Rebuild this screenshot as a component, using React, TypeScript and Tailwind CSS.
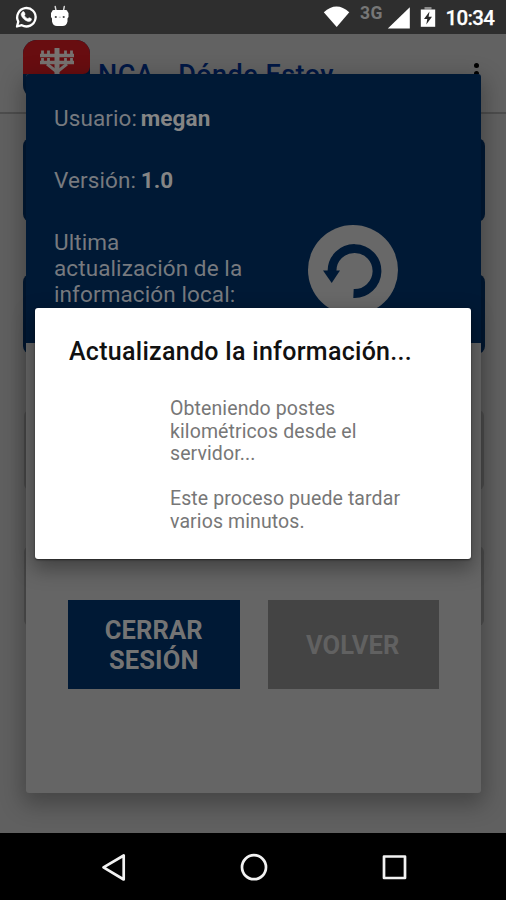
import React from "react";

function StatusBar() {
  return (
    <header className="relative z-30 h-[34px] shrink-0 bg-[#2e2e2e]">
      <svg width="506" height="34" viewBox="0 0 506 34" aria-hidden="true">
        <path d="M17 26.5 18.3 21.6A9.2 9.2 0 1 1 21.8 25.2Z" fill="none" stroke="#fff" strokeWidth="2.300" strokeLinejoin="round" />
        <path d="M22.7 11.8c.5-.4 1.2-.3 1.5.2l.9 2c.2.6-.8 1.3-.6 1.7.7 1.4 1.7 2.3 3.1 2.9.5.2 1.2-1.1 1.7-.9l1.9.9c.5.3.3 1.4-.1 2-.8 1-2.3 1.2-3.8.6-3-1.1-5-3.2-6-5.7-.5-1.400.1-2.900 1.400-3.700Z" fill="#fff" stroke="#fff" strokeWidth=".5" />
        <path d="m55.200 6.500.8 4M64.300 6.500l-.8 4" stroke="#ddd" strokeWidth="1.400" strokeLinecap="round" />
        <path d="M53.500 10h12.500q1.500 0 1.500 1.500l1 1.500v4l-1 1.500v3q-1 4.500-5 4.500h-5.500q-4 0-5-4.500v-3l-1-1.500v-4l1-1.500q0-1.500 1.500-1.500Z" fill="#fff" />
        <circle cx="55.800" cy="17" r="1.100" fill="#444" />
        <circle cx="63.700" cy="17" r="1.100" fill="#444" />
        <path d="M58.800 17.200h2" stroke="#bbb" />
        <path d="M323.800 12.200Q336.500 1 349.300 12.200L336.700 27Z" fill="#fff" />
        <path d="M409.800 7.200V28.500H387.800Z" fill="#fff" />
        <path d="M424.500 9.500V7h7v2.500Z" fill="#8a8a8a" />
        <path d="M420.800 9.500h14.400v17.300h-14.400Z" fill="#fff" />
        <path d="m429.500 11.500-5.500 7.500h3.300l-1 5.500 5.700-7.700h-3.400Z" fill="#292929" />
        <text x="360" y="18.800" fontSize="17.500" fontWeight="700" fill="#777" textLength="22.500" className="font-['Roboto',sans-serif]">3G</text>
        <text x="445.500" y="25.300" fontSize="20.500" fontWeight="500" fill="#fff" stroke="#fff" strokeWidth=".25" textLength="49.500" className="font-['Roboto',sans-serif]">10:34</text>
      </svg>
    </header>
  );
}

function PoleLogo() {
  return (
    <svg width="67" height="59" viewBox="0 0 67 59" className="rounded-[14px]" aria-hidden="true">
      <path d="M0 0h67v59H0Z" fill="#001935" />
      <path d="M0 0h67v27q-1 7-7 7H0Z" fill="#680d10" />
      <g fill="none" stroke="#777371">
        <path d="M34 8v30" strokeWidth="5" />
        <path d="M17 15.500h34M17 22.500h34" strokeWidth="3.400" />
        <path d="M19.500 10.500v5M25.500 10.500v5M42.500 10.500v5M48.500 10.500v5M19.500 18v4M25.500 18v4M42.500 18v4M48.500 18v4" strokeWidth="2.800" />
        <path d="m24 24 10 8 10-8" strokeWidth="3" />
      </g>
    </svg>
  );
}

function HomeScreen() {
  return (
    <div className="flex flex-1 flex-col bg-[#606060]">
      <div className="flex h-20 shrink-0 items-start border-b-2 border-[#4d4d4d] bg-[#626262] pl-[23px] pt-1.5">
        <PoleLogo />
        <h1 className="ml-2 mt-[19px] w-[237px] whitespace-nowrap text-[27px] font-medium leading-8 tracking-[0.480px] text-[#001745]">NCA - Dónde Estoy</h1>
        <div className="ml-[138.500px] mt-[22.500px] flex flex-col gap-[3px]">
          <i className="size-[5px] rounded-full bg-black" />
          <i className="size-[5px] rounded-full bg-black" />
          <i className="size-[5px] rounded-full bg-black" />
        </div>
      </div>
      <div className="ml-[22.500px] mr-[21.500px] mt-6 flex flex-col">
        <div className="mb-[52px] h-[84px] rounded-lg bg-[#001935]" />
        <div className="mb-14 h-20 rounded-lg bg-[#001935]" />
        <div className="mx-px mb-14 h-20 rounded-md bg-[#505050]" />
        <div className="mx-px h-20 rounded-md bg-[#505050]" />
      </div>
    </div>
  );
}

function SessionPanel() {
  return (
    <section className="absolute left-[26px] top-[74px] flex h-[719px] w-[455px] flex-col rounded-[3px] bg-[#656565] shadow-[0_8px_22px_4px_rgba(0,0,0,0.28)]">
      <div className="h-[269px] rounded-t-[3px] bg-[#001935] pl-7 pt-[31px] text-[22.500px] leading-[26px] tracking-[0.100px] text-[#777a7f]">
        <p>Usuario: <b className="-ml-0.5 text-[#858585]">megan</b></p>
        <p className="mt-9">Versión: <b className="-ml-px text-[#858585]">1.0</b></p>
        <div className="mt-9 flex">
          <p className="w-[220px]">Ultima<br />actualización de la<br />información local:</p>
          <svg width="90" height="90" viewBox="0 0 90 90" className="-mt-[4px] ml-[34px]" aria-hidden="true">
            <circle cx="45" cy="45" r="45" fill="#686868" />
            <path d="M45.500 68.500A22.500 22.500 0 1 0 24 46" fill="none" stroke="#001935" strokeWidth="8.800" />
            <path d="M15 45.500h17L23.700 58Z" fill="#001935" />
          </svg>
        </div>
      </div>
      <div className="mt-[257px] flex gap-7 pl-[42px] text-[25.500px] font-bold leading-[30px] tracking-[0.150px]">
        <div className="flex h-[89px] w-[171.500px] items-center justify-center bg-[#001935] pt-px text-center text-[#747474]"><span>CERRAR<br />SESIÓN</span></div>
        <div className="flex h-[89px] w-[171.500px] items-center justify-center bg-[#444444] pr-px text-[#616161]">VOLVER</div>
      </div>
    </section>
  );
}

function ProgressDialog() {
  return (
    <section role="dialog" className="absolute left-[35px] top-[308px] h-[251px] w-[436px] rounded-[3px] bg-white pl-[34px] pt-7 shadow-[0_8px_20px_2px_rgba(0,0,0,0.35),0_1px_2px_rgba(0,0,0,0.5)]">
      <h2 className="whitespace-nowrap text-[25px] font-medium leading-8 tracking-[0.290px] text-[#111]">Actualizando la información...</h2>
      <div className="ml-[101px] mt-[30px] text-[19.500px] leading-[22.500px] tracking-[0.100px] text-[#777]">
        <p>Obteniendo postes<br />kilométricos desde el<br />servidor...</p>
        <p className="mt-[22.500px]">Este proceso puede tardar<br />varios minutos.</p>
      </div>
    </section>
  );
}

function NavigationBar() {
  return (
    <nav className="relative z-30 flex h-[67px] shrink-0 bg-black">
      <svg width="506" height="67" viewBox="0 0 506 67" fill="none" stroke="#f2f2f2" strokeWidth="2.700" strokeLinejoin="round" aria-hidden="true">
        <path d="M123.700 22.500v24L103.500 34.400Z" />
        <circle cx="254" cy="34.200" r="12" />
        <rect x="384" y="23.500" width="21" height="21.500" />
      </svg>
    </nav>
  );
}

export default function App() {
  return (
    <main className="relative flex h-[900px] w-[506px] flex-col overflow-hidden bg-black font-['Roboto',sans-serif]">
      <StatusBar />
      <HomeScreen />
      <SessionPanel />
      <ProgressDialog />
      <NavigationBar />
    </main>
  );
}
